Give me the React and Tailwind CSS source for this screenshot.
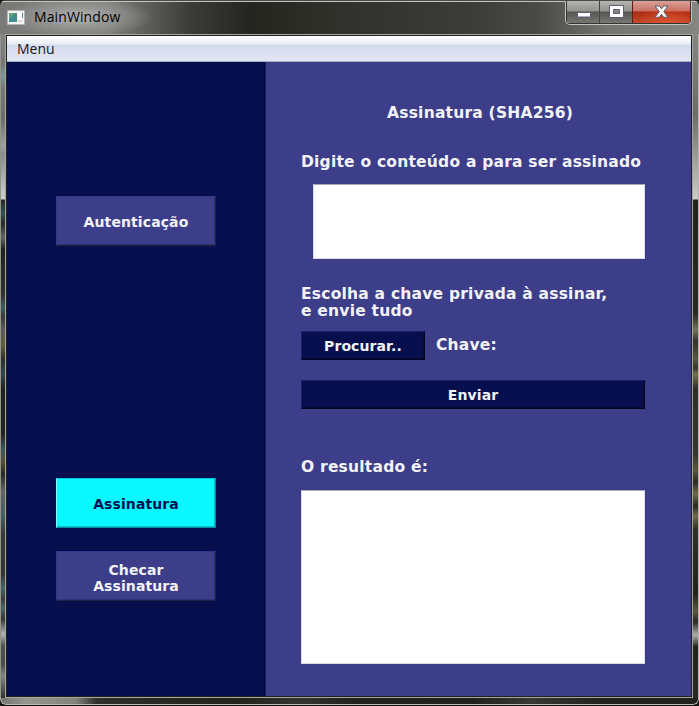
function WindowControls() {
  return (
    <div className="mr-[7px] flex h-[24px] w-[127px] overflow-hidden rounded-b-[5px] border border-t-0 border-[#c4c4c0] bg-[#343434] px-px pb-px">
      <div className="flex w-[33px] justify-center border-r border-[#444] bg-[linear-gradient(#b5b5b2_0%,#92928f_45%,#555552_50%,#777774_100%)] pt-[11px]">
        <svg width="15" height="6" viewBox="0 0 15 6">
          <rect x="1.5" y="0.5" width="13" height="4.5" rx="0.8" fill="#fff" stroke="#5b5f6c" />
        </svg>
      </div>
      <div className="flex w-[33px] justify-center border-r border-[#5c2018] bg-[linear-gradient(#b5b5b2_0%,#92928f_45%,#555552_50%,#777774_100%)] pt-[4px]">
        <svg width="15" height="14" viewBox="0 0 15 14">
          <path d="M.5.5h14v12H.5z" fill="#fff" stroke="#5b5f6c" />
          <path d="M4.5 4.5h6v4h-6z" fill="#858583" stroke="#5b5f6c" />
        </svg>
      </div>
      <div className="flex flex-1 justify-center bg-[radial-gradient(ellipse_at_60%_100%,#e85a32aa,transparent_60%),linear-gradient(#dca096_0%,#c77266_45%,#ad2a12_50%,#c34b2c_100%)] pt-[4px]">
        <svg width="15" height="14" viewBox="0 0 15 14">
          <path d="M1 1h4.2l2.3 2.8L9.8 1H14L9.8 6.5 14 12.3H9.8L7.5 9.4l-2.3 2.9H1l4.2-5.8z" fill="#f7f7f7" stroke="#5d5867" strokeLinejoin="round" />
        </svg>
      </div>
    </div>
  );
}

function TitleBar() {
  return (
    <header className="flex h-[34px] items-start justify-between border-t border-[#4a4a48] bg-[radial-gradient(ellipse_75px_20px_at_78px_16px,#b5b5b3_0%,#9a9a98aa_55%,transparent_100%),linear-gradient(90deg,#797977_0%,#80807e_15%,#3c3c38_27%,#24251f_36%,#31312c_48%,#3c3d38_68%,#4a4b46_77%,#747571_87%,#858682_100%)] shadow-[inset_0_1px_0_#c4c4c2]">
      <div className="flex items-center pl-[7px] pt-[6px]">
        <svg width="18" height="15" viewBox="0 0 18 15">
          <path d="M.5.5h17v14H.5z" fill="#f5f5f5" stroke="#b4b4b4" />
          <path d="M2 3h8v9H2z" fill="#458d91" />
          <path d="M2 3h6L2 9z" fill="#63a776" />
          <path d="M11 3h4v7h-4z" fill="#fff" />
          <path d="M15 3h1v5h-1z" fill="#5d88ab" />
          <path d="M11 10h4v2h-4z" fill="#d7d7d2" />
        </svg>
        <span className="pl-[9px] font-['Open_Sans','Noto_Sans',sans-serif] text-[14px] leading-[20px] tracking-[0.1px] text-black">MainWindow</span>
      </div>
      <WindowControls />
    </header>
  );
}

const label =
  "font-['DejaVu_Sans',sans-serif] text-[15.5px] leading-[17px] font-bold tracking-[0.22px] text-[#f3f3f5] whitespace-nowrap";
const buttonText =
  "flex items-center justify-center font-['DejaVu_Sans',sans-serif] text-[14px] leading-[16px] tracking-[0.1px] font-bold text-center";
const sideButton =
  "h-[50px] w-[160px] border border-t-[#34388a] border-l-[#34388a] border-r-[#20213f] border-b-[#20213f] bg-[#3c3e8a] text-[#f3f3f5] shadow-[inset_-1px_-1px_0_#303371]";
const darkButton =
  "h-[29px] border border-t-[#1b2064] border-l-[#1b2064] border-r-[#02041d] border-b-[#02041d] bg-[#070f4f] text-[#f3f3f5] shadow-[inset_-1px_-1px_0_#050a38]";

function Sidebar() {
  return (
    <aside className="flex w-[259px] flex-col border-r border-[#171d61] bg-[#070f4f] pl-[49px] pt-[134px] shadow-[inset_-1px_0_0_#030839]">
      <button className={`${buttonText} ${sideButton} pt-[2px]`}>Autenticação</button>
      <button className={`${buttonText} mt-[232px] h-[50px] w-[160px] border border-t-[#08c8de] border-l-[#7efcff] border-r-[#078b98] border-b-[#078b98] bg-[#0bf7ff] pt-[2px] text-[#07104f] shadow-[inset_-1px_-1px_0_#06c3d1]`}>
        Assinatura
      </button>
      <button className={`${buttonText} ${sideButton} mt-[23px] pt-[4px]`}>
        Checar
        <br />
        Assinatura
      </button>
    </aside>
  );
}

function SignaturePanel() {
  return (
    <main className="flex flex-1 flex-col bg-[#3c3e8a] pl-[35px] pr-[46px] pt-[43px]">
      <h1 className={`${label} pl-[86px]`}>Assinatura (SHA256)</h1>
      <p className={`${label} mt-[32px]`}>Digite o conteúdo a para ser assinado</p>
      <textarea className="ml-[12px] mt-[13px] block h-[75px] w-[332px] resize-none border border-[#d9dce6] border-t-[#a5a7b7] bg-white" />
      <p className={`${label} mt-[27px]`}>
        Escolha a chave privada à assinar,
        <br />e envie tudo
      </p>
      <div className="mt-[11px] flex items-center">
        <button className={`${buttonText} ${darkButton} w-[124px]`}>Procurar..</button>
        <span className={`${label} pl-[11px]`}>Chave:</span>
      </div>
      <button className={`${buttonText} ${darkButton} mt-[20px] w-[344px]`}>Enviar</button>
      <p className={`${label} mt-[50px]`}>O resultado é:</p>
      <textarea className="mt-[14px] block h-[174px] w-[344px] resize-none border border-[#d9dce6] border-t-[#a5a7b7] bg-white" />
    </main>
  );
}

export default function App() {
  return (
    <div className="h-[706px] w-[699px] overflow-hidden bg-[#151613]">
      <div className="flex h-[705px] flex-col overflow-hidden rounded-[6px] bg-[#2b2c27]">
        <TitleBar />
        <div className="flex h-[664px]">
          <div className="w-[5px] border-l border-[#93938f] bg-[linear-gradient(#858682_0px,#777874_30px,#7d9696_42px,#777874_55px,#6d6e6a_85px,#a0a09e_112px,#8c8c8a_120px,#cececc_165px,#252620_166px,#335153_180px,#292a26_190px,#656662_203px,#22231d_215px,#30312c_260px,#3e5d60_273px,#3b3c37_283px,#5a5a57_295px,#62603c_311px,#30312b_325px,#31494b_340px,#22231d_355px,#22231d_400px,#36575a_415px,#585334_427px,#282923_440px,#626361_457px,#426064_481px,#3a3b37_500px,#353632_540px,#45666b_554px,#3c3d38_565px,#4c6869_574px,#353631_585px,#b0b2b5_600px,#51524e_612px,#494a45_630px,#858580_642px,#31322d_664px)]" />
          <div className="flex w-[688px] flex-col border border-[#a4a5a0] bg-[#20221f] p-px">
            <nav className="flex h-[26px] shrink-0 items-center border-b border-[#a6adbe] bg-[linear-gradient(#ffffff_0px,#e9edf5_8px,#d4dbed_9px,#e2e7f5_25px)] pl-[10px] font-['Open_Sans','Noto_Sans',sans-serif] text-[14px] leading-[20px] text-[#17171b]">
              Menu
            </nav>
            <div className="flex min-h-0 flex-1">
              <Sidebar />
              <SignaturePanel />
            </div>
          </div>
          <div className="w-[6px] border-r border-[#b4b5b0] bg-[linear-gradient(#858682_0px,#6c6d69_80px,#cbcbc8_165px,#22231d_166px,#292a25_280px,#77735b_296px,#30312b_307px,#595741_325px,#353631_334px,#77714c_340px,#2e2f29_355px,#353631_420px,#5c583e_436px,#292a26_448px,#716b4a_460px,#292a26_472px,#716b4a_482px,#30312b_495px,#22231d_560px,#5c583e_577px,#292a26_588px,#b0b0ae_601px,#22231d_613px,#292a25_664px)]" />
        </div>
        <div className="h-[7px] rounded-b-[6px] border border-t-0 border-[#b6b7b2] bg-[linear-gradient(90deg,#777773_0px,#96958e_25px,#83837c_75px,#30312b_95px,#292a23_145px,#22241b_240px,#343530_300px,#22231d_350px,#20211b_470px,#383934_530px,#22231d_600px)]" />
      </div>
    </div>
  );
}
